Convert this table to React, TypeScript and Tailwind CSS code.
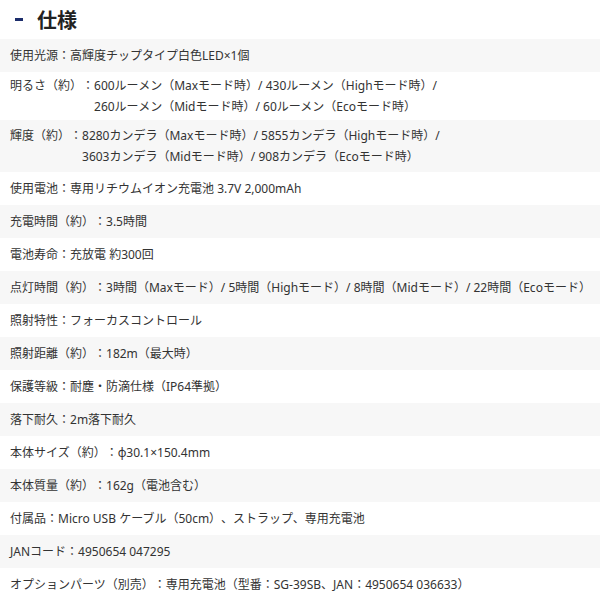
import React from 'react';

type Spec = { label: string; lines: string[]; pad?: string };

const SPECS: Spec[] = [
  { label: '使用光源：', lines: ['高輝度チップタイプ白色LED×1個'] },
  {
    label: '明るさ（約）：',
    lines: ['600ルーメン（Maxモード時）/ 430ルーメン（Highモード時）/', '260ルーメン（Midモード時）/ 60ルーメン（Ecoモード時）'],
    pad: 'py-[3px]',
  },
  {
    label: '輝度（約）：',
    lines: ['8280カンデラ（Maxモード時）/ 5855カンデラ（Highモード時）/', '3603カンデラ（Midモード時）/ 908カンデラ（Ecoモード時）'],
    pad: 'py-[5px]',
  },
  { label: '使用電池：', lines: ['専用リチウムイオン充電池 3.7V 2,000mAh'] },
  { label: '充電時間（約）：', lines: ['3.5時間'] },
  { label: '電池寿命：', lines: ['充放電 約300回'] },
  { label: '点灯時間（約）：', lines: ['3時間（Maxモード）/ 5時間（Highモード）/ 8時間（Midモード）/ 22時間（Ecoモード）'] },
  { label: '照射特性：', lines: ['フォーカスコントロール'] },
  { label: '照射距離（約）：', lines: ['182m（最大時）'] },
  { label: '保護等級：', lines: ['耐塵・防滴仕様（IP64準拠）'] },
  { label: '落下耐久：', lines: ['2m落下耐久'] },
  { label: '本体サイズ（約）：', lines: ['φ30.1×150.4mm'] },
  { label: '本体質量（約）：', lines: ['162g（電池含む）'] },
  { label: '付属品：', lines: ['Micro USB ケーブル（50cm）、ストラップ、専用充電池'] },
  { label: 'JANコード：', lines: ['4950654 047295'] },
  { label: 'オプションパーツ（別売）：', lines: ['専用充電池（型番：SG-39SB、JAN：4950654 036633）'] },
];

const App: React.FC = () => {
  return (
    <div className="w-[600px] h-[600px] overflow-hidden bg-white text-[#333] [text-spacing-trim:space-all] font-['Noto_Sans','Noto_Sans_CJK_JP',sans-serif]">
      <div className="flex items-center h-[39px] pl-[15px] gap-[14px]">
        <span className="w-[8px] h-[3px] bg-[#1c2d6b]" />
        <h2 className="text-[20px] font-bold text-[#222] leading-none font-['Noto_Sans_CJK_JP',sans-serif]">仕様</h2>
      </div>
      <div className="flex flex-col">
        {SPECS.map((s, i) => (
          <div
            key={i}
            className={`flex px-[10px] text-[12px] leading-[21px] whitespace-nowrap ${s.pad ?? 'py-[6px]'} ${
              i % 2 === 0 ? 'bg-[#f7f7f7]' : 'bg-white'
            }`}
          >
            <span>{s.label}</span>
            <div className="flex flex-col">
              {s.lines.map((l, j) => (
                <span key={j}>{l}</span>
              ))}
            </div>
          </div>
        ))}
      </div>
    </div>
  );
};

export default App;
